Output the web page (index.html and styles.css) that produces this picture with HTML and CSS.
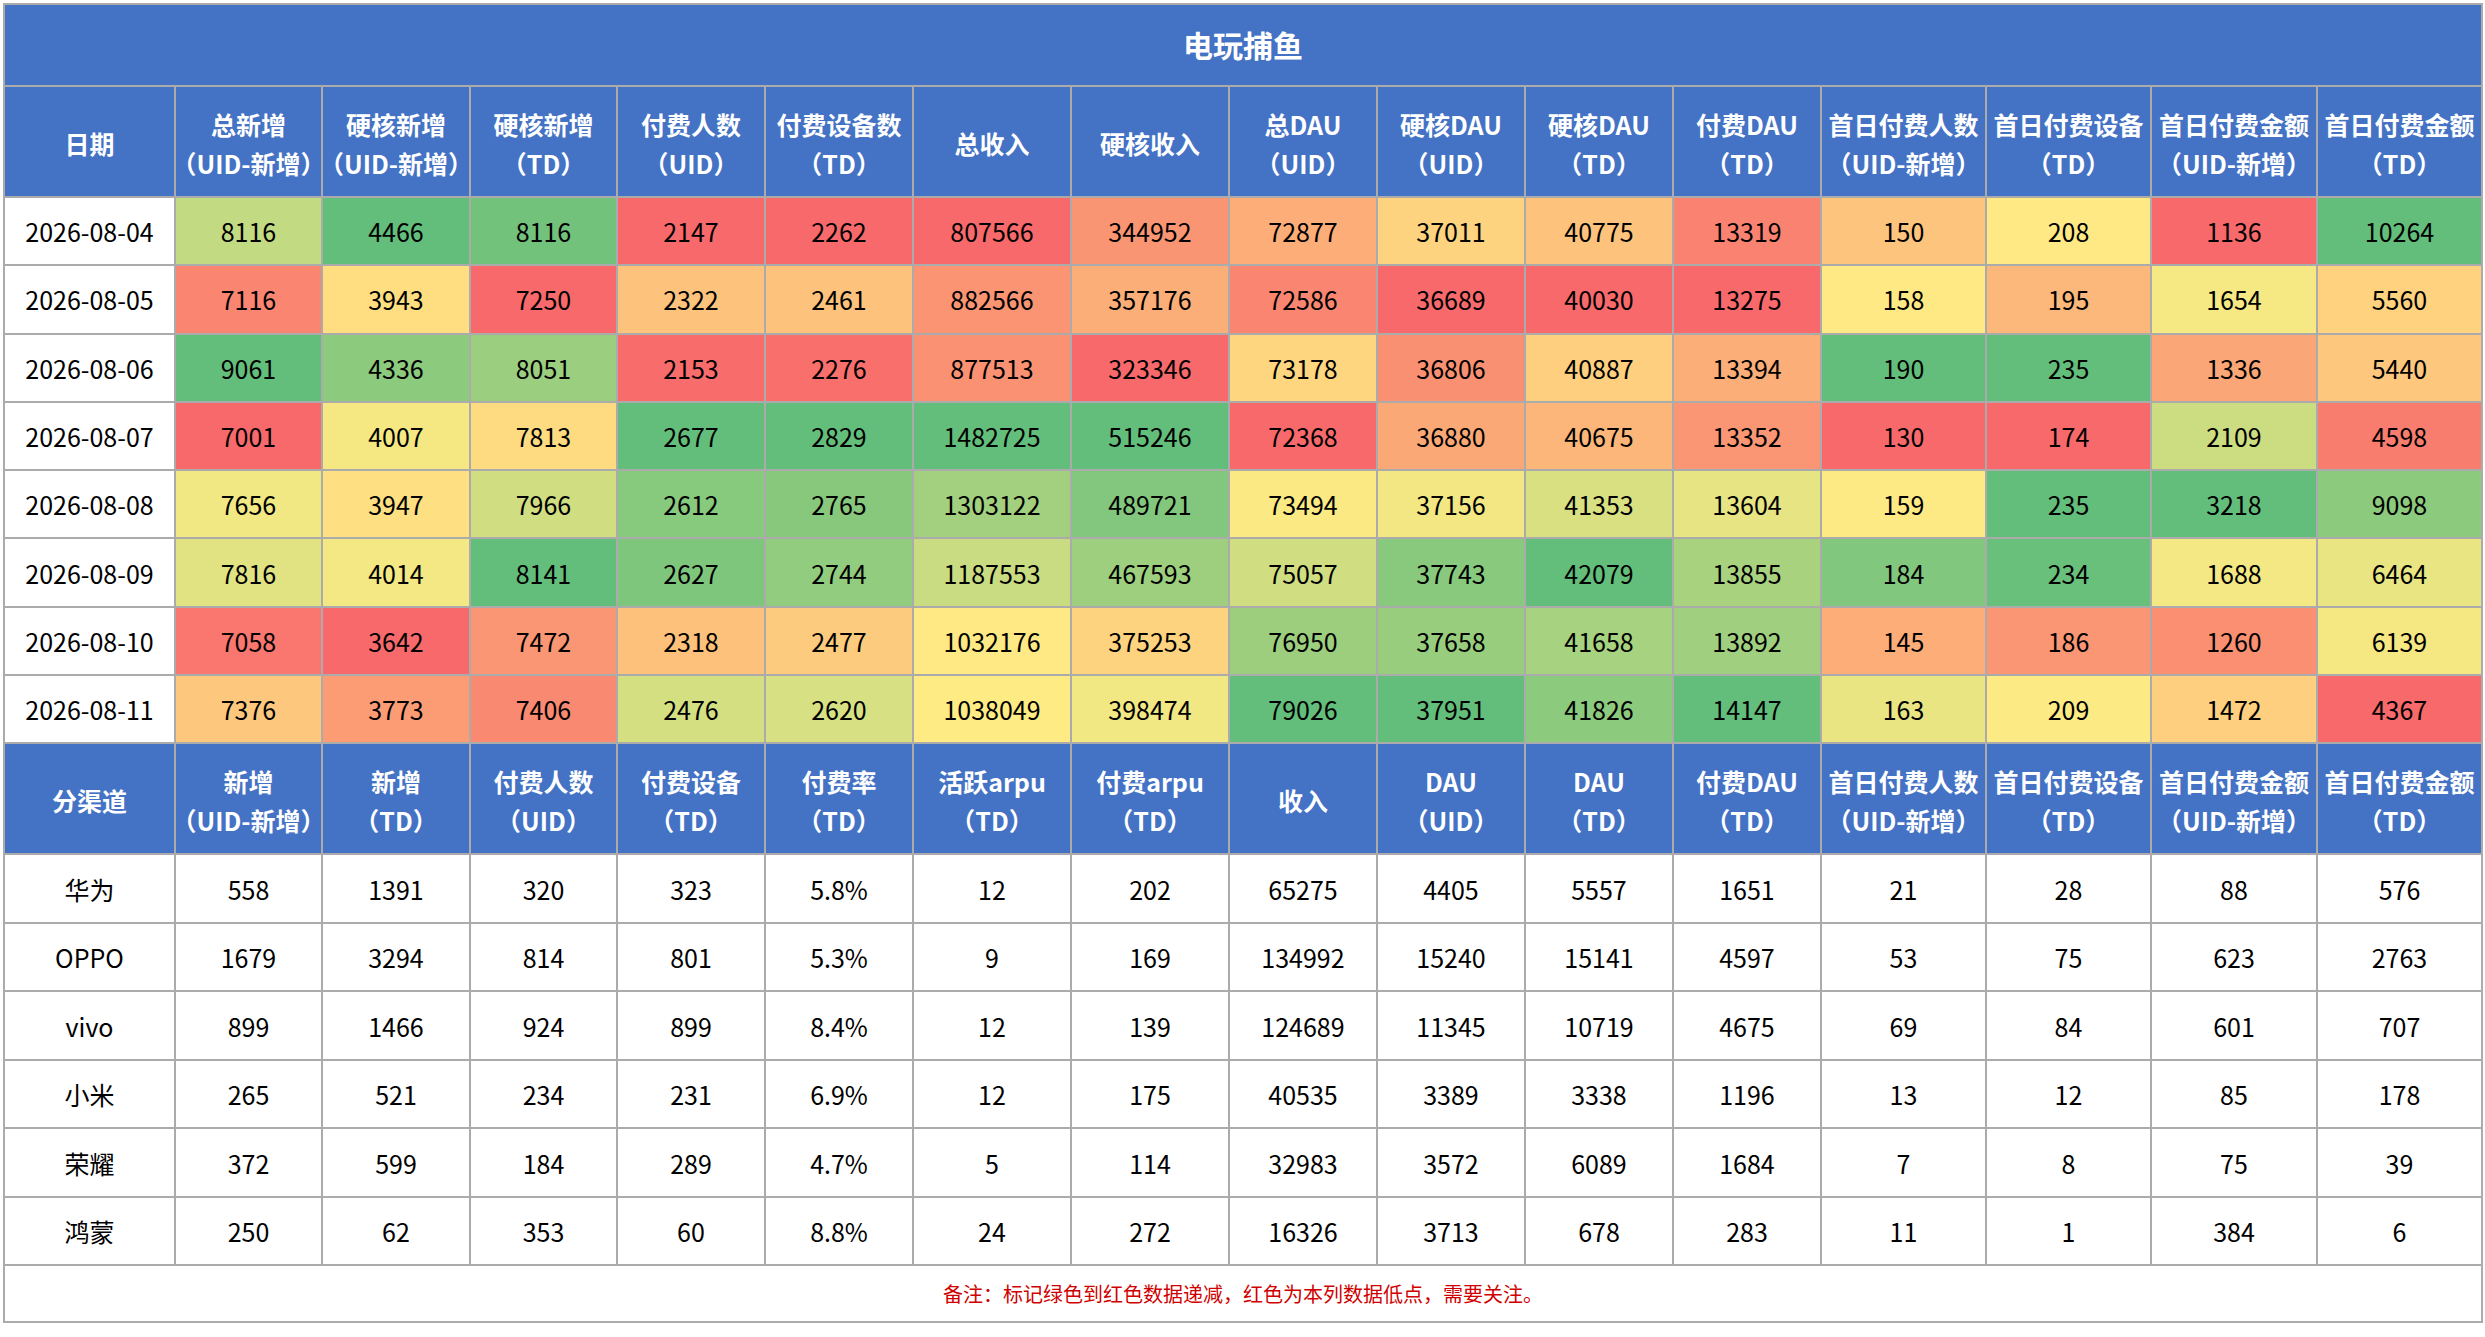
FILE: index.html
```html
<!DOCTYPE html>
<html lang="zh-CN">
<head>
<meta charset="utf-8">
<title>电玩捕鱼</title>
<link rel="stylesheet" href="styles.css">
</head>
<body>
<div class="sheet">
  <div class="cell title">电玩捕鱼</div>

  <div class="row">
    <div class="cell head">日期</div>
    <div class="cell head"><span>总新增</span><span>（UID-新增）</span></div>
    <div class="cell head"><span>硬核新增</span><span>（UID-新增）</span></div>
    <div class="cell head"><span>硬核新增</span><span>（TD）</span></div>
    <div class="cell head"><span>付费人数</span><span>（UID）</span></div>
    <div class="cell head"><span>付费设备数</span><span>（TD）</span></div>
    <div class="cell head">总收入</div>
    <div class="cell head">硬核收入</div>
    <div class="cell head"><span>总DAU</span><span>（UID）</span></div>
    <div class="cell head"><span>硬核DAU</span><span>（UID）</span></div>
    <div class="cell head"><span>硬核DAU</span><span>（TD）</span></div>
    <div class="cell head"><span>付费DAU</span><span>（TD）</span></div>
    <div class="cell head"><span>首日付费人数</span><span>（UID-新增）</span></div>
    <div class="cell head"><span>首日付费设备</span><span>（TD）</span></div>
    <div class="cell head"><span>首日付费金额</span><span>（UID-新增）</span></div>
    <div class="cell head"><span>首日付费金额</span><span>（TD）</span></div>
  </div>

  <div class="row heat">
    <div class="cell">2026-08-04</div>
    <div class="cell num">8116</div><div class="cell num">4466</div><div class="cell num">8116</div><div class="cell num">2147</div><div class="cell num">2262</div><div class="cell num">807566</div><div class="cell num">344952</div><div class="cell num">72877</div><div class="cell num">37011</div><div class="cell num">40775</div><div class="cell num">13319</div><div class="cell num">150</div><div class="cell num">208</div><div class="cell num">1136</div><div class="cell num">10264</div>
  </div>
  <div class="row heat">
    <div class="cell">2026-08-05</div>
    <div class="cell num">7116</div><div class="cell num">3943</div><div class="cell num">7250</div><div class="cell num">2322</div><div class="cell num">2461</div><div class="cell num">882566</div><div class="cell num">357176</div><div class="cell num">72586</div><div class="cell num">36689</div><div class="cell num">40030</div><div class="cell num">13275</div><div class="cell num">158</div><div class="cell num">195</div><div class="cell num">1654</div><div class="cell num">5560</div>
  </div>
  <div class="row heat">
    <div class="cell">2026-08-06</div>
    <div class="cell num">9061</div><div class="cell num">4336</div><div class="cell num">8051</div><div class="cell num">2153</div><div class="cell num">2276</div><div class="cell num">877513</div><div class="cell num">323346</div><div class="cell num">73178</div><div class="cell num">36806</div><div class="cell num">40887</div><div class="cell num">13394</div><div class="cell num">190</div><div class="cell num">235</div><div class="cell num">1336</div><div class="cell num">5440</div>
  </div>
  <div class="row heat">
    <div class="cell">2026-08-07</div>
    <div class="cell num">7001</div><div class="cell num">4007</div><div class="cell num">7813</div><div class="cell num">2677</div><div class="cell num">2829</div><div class="cell num">1482725</div><div class="cell num">515246</div><div class="cell num">72368</div><div class="cell num">36880</div><div class="cell num">40675</div><div class="cell num">13352</div><div class="cell num">130</div><div class="cell num">174</div><div class="cell num">2109</div><div class="cell num">4598</div>
  </div>
  <div class="row heat">
    <div class="cell">2026-08-08</div>
    <div class="cell num">7656</div><div class="cell num">3947</div><div class="cell num">7966</div><div class="cell num">2612</div><div class="cell num">2765</div><div class="cell num">1303122</div><div class="cell num">489721</div><div class="cell num">73494</div><div class="cell num">37156</div><div class="cell num">41353</div><div class="cell num">13604</div><div class="cell num">159</div><div class="cell num">235</div><div class="cell num">3218</div><div class="cell num">9098</div>
  </div>
  <div class="row heat">
    <div class="cell">2026-08-09</div>
    <div class="cell num">7816</div><div class="cell num">4014</div><div class="cell num">8141</div><div class="cell num">2627</div><div class="cell num">2744</div><div class="cell num">1187553</div><div class="cell num">467593</div><div class="cell num">75057</div><div class="cell num">37743</div><div class="cell num">42079</div><div class="cell num">13855</div><div class="cell num">184</div><div class="cell num">234</div><div class="cell num">1688</div><div class="cell num">6464</div>
  </div>
  <div class="row heat">
    <div class="cell">2026-08-10</div>
    <div class="cell num">7058</div><div class="cell num">3642</div><div class="cell num">7472</div><div class="cell num">2318</div><div class="cell num">2477</div><div class="cell num">1032176</div><div class="cell num">375253</div><div class="cell num">76950</div><div class="cell num">37658</div><div class="cell num">41658</div><div class="cell num">13892</div><div class="cell num">145</div><div class="cell num">186</div><div class="cell num">1260</div><div class="cell num">6139</div>
  </div>
  <div class="row heat">
    <div class="cell">2026-08-11</div>
    <div class="cell num">7376</div><div class="cell num">3773</div><div class="cell num">7406</div><div class="cell num">2476</div><div class="cell num">2620</div><div class="cell num">1038049</div><div class="cell num">398474</div><div class="cell num">79026</div><div class="cell num">37951</div><div class="cell num">41826</div><div class="cell num">14147</div><div class="cell num">163</div><div class="cell num">209</div><div class="cell num">1472</div><div class="cell num">4367</div>
  </div>

  <div class="row">
    <div class="cell head">分渠道</div>
    <div class="cell head"><span>新增</span><span>（UID-新增）</span></div>
    <div class="cell head"><span>新增</span><span>（TD）</span></div>
    <div class="cell head"><span>付费人数</span><span>（UID）</span></div>
    <div class="cell head"><span>付费设备</span><span>（TD）</span></div>
    <div class="cell head"><span>付费率</span><span>（TD）</span></div>
    <div class="cell head"><span>活跃arpu</span><span>（TD）</span></div>
    <div class="cell head"><span>付费arpu</span><span>（TD）</span></div>
    <div class="cell head">收入</div>
    <div class="cell head"><span>DAU</span><span>（UID）</span></div>
    <div class="cell head"><span>DAU</span><span>（TD）</span></div>
    <div class="cell head"><span>付费DAU</span><span>（TD）</span></div>
    <div class="cell head"><span>首日付费人数</span><span>（UID-新增）</span></div>
    <div class="cell head"><span>首日付费设备</span><span>（TD）</span></div>
    <div class="cell head"><span>首日付费金额</span><span>（UID-新增）</span></div>
    <div class="cell head"><span>首日付费金额</span><span>（TD）</span></div>
  </div>

  <div class="row">
    <div class="cell">华为</div>
    <div class="cell">558</div><div class="cell">1391</div><div class="cell">320</div><div class="cell">323</div><div class="cell">5.8%</div><div class="cell">12</div><div class="cell">202</div><div class="cell">65275</div><div class="cell">4405</div><div class="cell">5557</div><div class="cell">1651</div><div class="cell">21</div><div class="cell">28</div><div class="cell">88</div><div class="cell">576</div>
  </div>
  <div class="row">
    <div class="cell">OPPO</div>
    <div class="cell">1679</div><div class="cell">3294</div><div class="cell">814</div><div class="cell">801</div><div class="cell">5.3%</div><div class="cell">9</div><div class="cell">169</div><div class="cell">134992</div><div class="cell">15240</div><div class="cell">15141</div><div class="cell">4597</div><div class="cell">53</div><div class="cell">75</div><div class="cell">623</div><div class="cell">2763</div>
  </div>
  <div class="row">
    <div class="cell">vivo</div>
    <div class="cell">899</div><div class="cell">1466</div><div class="cell">924</div><div class="cell">899</div><div class="cell">8.4%</div><div class="cell">12</div><div class="cell">139</div><div class="cell">124689</div><div class="cell">11345</div><div class="cell">10719</div><div class="cell">4675</div><div class="cell">69</div><div class="cell">84</div><div class="cell">601</div><div class="cell">707</div>
  </div>
  <div class="row">
    <div class="cell">小米</div>
    <div class="cell">265</div><div class="cell">521</div><div class="cell">234</div><div class="cell">231</div><div class="cell">6.9%</div><div class="cell">12</div><div class="cell">175</div><div class="cell">40535</div><div class="cell">3389</div><div class="cell">3338</div><div class="cell">1196</div><div class="cell">13</div><div class="cell">12</div><div class="cell">85</div><div class="cell">178</div>
  </div>
  <div class="row">
    <div class="cell">荣耀</div>
    <div class="cell">372</div><div class="cell">599</div><div class="cell">184</div><div class="cell">289</div><div class="cell">4.7%</div><div class="cell">5</div><div class="cell">114</div><div class="cell">32983</div><div class="cell">3572</div><div class="cell">6089</div><div class="cell">1684</div><div class="cell">7</div><div class="cell">8</div><div class="cell">75</div><div class="cell">39</div>
  </div>
  <div class="row">
    <div class="cell">鸿蒙</div>
    <div class="cell">250</div><div class="cell">62</div><div class="cell">353</div><div class="cell">60</div><div class="cell">8.8%</div><div class="cell">24</div><div class="cell">272</div><div class="cell">16326</div><div class="cell">3713</div><div class="cell">678</div><div class="cell">283</div><div class="cell">11</div><div class="cell">1</div><div class="cell">384</div><div class="cell">6</div>
  </div>

  <div class="cell note">备注：标记绿色到红色数据递减，红色为本列数据低点，需要关注。</div>
</div>
<script src="script.js"></script>
</body>
</html>
```

FILE: styles.css
```css
* {
  box-sizing: border-box;
}

html,
body {
  margin: 0;
  background: #ffffff;
}

body {
  padding: 3px 0 0 3px;
  font-family: "Noto Sans CJK SC", "Noto Sans", sans-serif;
  color: #000000;
}

.sheet {
  display: grid;
  width: 2480px;
  grid-template-columns: 169px 145px 146px 145px 146px 146px 156px 156px 146px 146px 146px 146px 163px 163px 164px 163px;
  grid-template-rows: 80px 109px repeat(8, 66.3px) 109px repeat(6, 66.5px) 55px;
  gap: 2px;
  padding: 2px;
  background: #ababab;
}

.row {
  display: contents;
}

.cell {
  display: flex;
  align-items: center;
  justify-content: center;
  text-align: center;
  white-space: nowrap;
  background: #ffffff;
  font-size: 25px;
}

.title {
  grid-column: 1 / -1;
  background: #4472c4;
  color: #ffffff;
  font-weight: 700;
  font-size: 30px;
  padding-bottom: 3px;
}

.head {
  flex-direction: column;
  background: #4472c4;
  color: #ffffff;
  font-weight: 700;
  line-height: 39px;
  padding-top: 4px;
}

.note {
  grid-column: 1 / -1;
  color: #d00000;
  font-size: 20px;
}
```

FILE: script.js
```js
(function () {
  var RED = [248, 105, 107];
  var YELLOW = [255, 235, 132];
  var GREEN = [99, 190, 123];

  function mix(a, b, t) {
    return a.map(function (v, i) {
      return Math.round(v + (b[i] - v) * t);
    });
  }

  function percentile(sorted, p) {
    var pos = (sorted.length - 1) * p;
    var lo = Math.floor(pos);
    var hi = Math.ceil(pos);
    return sorted[lo] + (sorted[hi] - sorted[lo]) * (pos - lo);
  }

  var rows = Array.prototype.slice.call(document.querySelectorAll('.row.heat'));
  var grid = rows.map(function (r) {
    return Array.prototype.slice.call(r.querySelectorAll('.num'));
  });
  if (!grid.length) return;

  for (var c = 0; c < grid[0].length; c++) {
    var cells = grid.map(function (r) { return r[c]; });
    var vals = cells.map(function (el) { return parseFloat(el.textContent); });
    var sorted = vals.slice().sort(function (a, b) { return a - b; });
    var min = sorted[0];
    var max = sorted[sorted.length - 1];
    var mid = percentile(sorted, 0.5);
    cells.forEach(function (el, i) {
      var v = vals[i];
      var rgb;
      if (v <= mid) {
        rgb = mid === min ? YELLOW : mix(RED, YELLOW, (v - min) / (mid - min));
      } else {
        rgb = max === mid ? YELLOW : mix(YELLOW, GREEN, (v - mid) / (max - mid));
      }
      el.style.backgroundColor = 'rgb(' + rgb.join(',') + ')';
    });
  }
})();
```
